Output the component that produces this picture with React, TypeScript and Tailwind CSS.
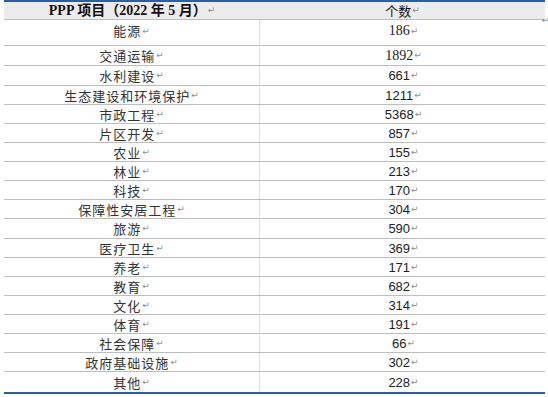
import React from 'react';

type Row = { name: string; count: string; serif?: boolean; h: string };

const rows: Row[] = [
  { name: '交通运输', count: '1892', serif: true, h: 'h-[20px]' },
  { name: '水利建设', count: '661', h: 'h-[20px]' },
  { name: '生态建设和环境保护', count: '1211', h: 'h-[19px]' },
  { name: '市政工程', count: '5368', h: 'h-[19px]' },
  { name: '片区开发', count: '857', h: 'h-[19px]' },
  { name: '农业', count: '155', h: 'h-[19px]' },
  { name: '林业', count: '213', h: 'h-[19px]' },
  { name: '科技', count: '170', h: 'h-[19px]' },
  { name: '保障性安居工程', count: '304', h: 'h-[19px]' },
  { name: '旅游', count: '590', h: 'h-[20px]' },
  { name: '医疗卫生', count: '369', h: 'h-[19px]' },
  { name: '养老', count: '171', h: 'h-[19px]' },
  { name: '教育', count: '682', h: 'h-[19px]' },
  { name: '文化', count: '314', h: 'h-[19px]' },
  { name: '体育', count: '191', h: 'h-[19px]' },
  { name: '社会保障', count: '66', h: 'h-[19px]' },
  { name: '政府基础设施', count: '302', h: 'h-[19px]' },
  { name: '其他', count: '228', h: 'h-[20px]' },
];

const cjk = "font-['Noto_Sans_CJK_SC',sans-serif]";

const Mark = () => (
  <span className="font-['DejaVu_Sans',sans-serif] font-normal text-[9px] text-[#8f8f8f] tracking-normal ml-[1px]">↵</span>
);

const App: React.FC = () => {
  return (
    <div className="w-[548px] h-[397px] bg-white relative">
      <div className="ml-[4px] w-[541px] border-t-2 border-b-2 border-[#2f5e9c]">
        {/* Header */}
        <div className="flex h-[18px] bg-[#ececec] border-b border-[#bdbdbd] relative">
          <div className="w-[256px] flex items-center justify-center font-['Liberation_Serif','Noto_Sans_CJK_SC',serif] font-bold text-[14px] text-[#111] leading-none">
            PPP 项目（2022 年 5 月）
            <Mark />
          </div>
          <div className={`flex-1 flex items-center justify-center ${cjk} text-[13px] text-[#111] leading-none`}>
            个数<Mark />
          </div>
          <div className="absolute right-[-4px] top-[3px]">
            <Mark />
          </div>
        </div>

        {/* First row */}
        <div className="flex h-[26px] border-b border-[#bdbdbd]">
          <div className={`w-[256px] border-r border-[#e2e2e2] flex justify-center pt-[2px] ${cjk} text-[13px] tracking-[1px] text-[#333] leading-[18px]`}>
            能源<Mark />
          </div>
          <div className="flex-1 flex justify-center pt-[2px] pl-[2px] font-['Liberation_Serif',serif] text-[14px] text-[#222] leading-[18px]">
            186<Mark />
          </div>
        </div>

        {rows.map((r, i) => (
          <div
            key={r.name}
            className={`flex ${r.h} ${i === rows.length - 1 ? '' : 'border-b border-[#bdbdbd]'}`}
          >
            <div className={`w-[256px] border-r border-[#e2e2e2] flex items-center justify-center ${cjk} text-[13px] tracking-[1px] text-[#333] leading-none`}>
              {r.name}
              <Mark />
            </div>
            <div
              className={`flex-1 flex items-center justify-center pl-[2px] text-[#222] leading-none ${
                r.serif ? "font-['Liberation_Serif',serif] text-[14px]" : "font-['Liberation_Sans',sans-serif] text-[13px]"
              }`}
            >
              {r.count}
              <Mark />
            </div>
          </div>
        ))}
      </div>
    </div>
  );
};

export default App;
